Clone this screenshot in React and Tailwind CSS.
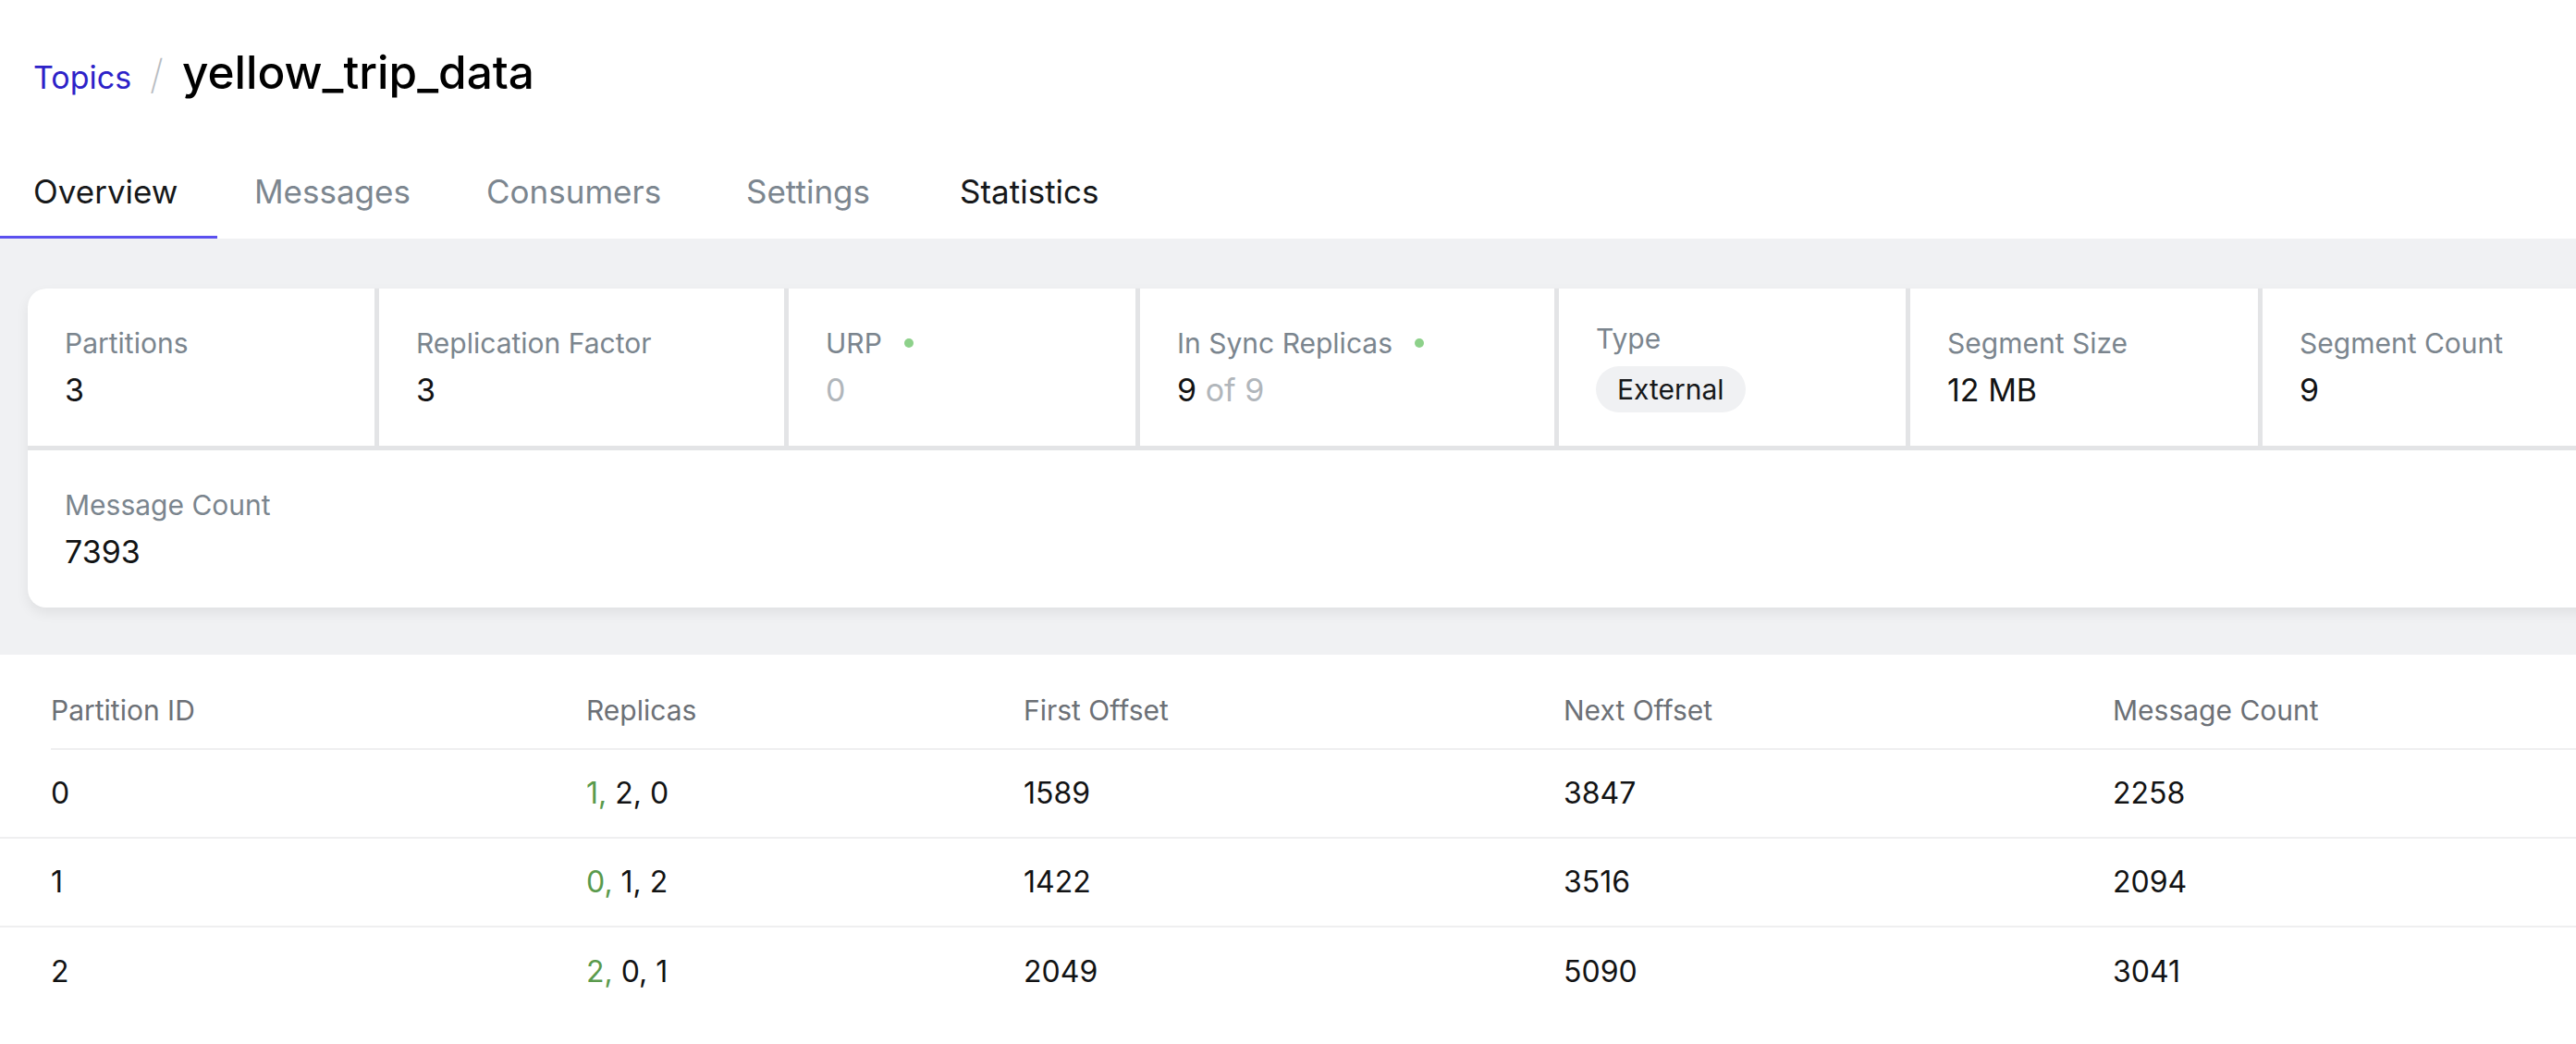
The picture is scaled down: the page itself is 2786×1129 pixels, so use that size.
const tabs = [
  { name: 'Overview', className: 'w-[235px] pl-9 text-[#16181a] border-[#5b50ef]' },
  { name: 'Messages', className: 'w-[251px] pl-10 text-[#7c868f] border-transparent' },
  { name: 'Consumers', className: 'w-[281px] pl-10 text-[#7c868f] border-transparent' },
  { name: 'Settings', className: 'w-[231px] pl-10 text-[#7c868f] border-transparent' },
  { name: 'Statistics', className: 'w-[240px] pl-10 text-[#16181a] border-transparent' },
];

const partitions = [
  { id: 0, replicas: [1, 2, 0], first: 1589, next: 3847, count: 2258 },
  { id: 1, replicas: [0, 1, 2], first: 1422, next: 3516, count: 2094 },
  { id: 2, replicas: [2, 0, 1], first: 2049, next: 5090, count: 3041 },
];

function Dot() {
  return <span className="ml-[24px] inline-block h-[10px] w-[10px] rounded-full bg-[#8dd18a]" />;
}

function Stat({ label, width, dot, children }) {
  return (
    <div className={`${width} flex-none bg-white pl-10 flex flex-col justify-center gap-[13px]`}>
      <div className="flex items-center text-[30px] leading-[36px] text-[#7b858e]">
        {label}
        {dot && <Dot />}
      </div>
      <div className="text-[34px] leading-[40px] text-[#121314]">{children}</div>
    </div>
  );
}

export default function App() {
  return (
    <div className="w-full overflow-hidden bg-white font-['Inter','Liberation_Sans',sans-serif]">
      {/* header */}
      <div className="pt-[48px]">
        <div className="flex items-baseline pl-9">
          <a className="text-[34px] leading-[60px] text-[#2d22c8]">Topics</a>
          <span className="mx-[20px] text-[44px] leading-[60px] font-extralight text-[#b9bdc2]">/</span>
          <h1 className="text-[49.5px] leading-[60px] font-medium text-black">yellow_trip_data</h1>
        </div>
        <div className="mt-[73px] flex">
          {tabs.map(t => (
            <div
              key={t.name}
              className={`${t.className} border-b-[3px] pb-[28px] text-[35px] leading-[40px]`}
            >
              {t.name}
            </div>
          ))}
        </div>
      </div>

      {/* stats */}
      <div className="bg-[#f0f1f3] pt-[54px] pb-[51px] pl-[30px]">
        <div className="w-[2792px] overflow-hidden rounded-[20px] bg-[#e3e4e6] shadow-[0_6px_14px_rgba(0,0,0,0.07)]">
          <div className="flex h-[170px] gap-[5px]">
            <Stat label="Partitions" width="w-[375px]">3</Stat>
            <Stat label="Replication Factor" width="w-[438px]">3</Stat>
            <Stat label="URP" width="w-[375px]" dot>
              <span className="text-[#b1b6bb]">0</span>
            </Stat>
            <Stat label="In Sync Replicas" width="w-[448px]" dot>
              9 <span className="text-[#b1b6bb]">of 9</span>
            </Stat>
            <div className="w-[375px] flex-none bg-white pl-10 flex flex-col justify-center gap-[12px]">
              <div className="text-[30px] leading-[36px] text-[#7b858e]">Type</div>
              <div>
                <span className="inline-block rounded-full bg-[#f0f1f3] px-[23px] py-[7px] text-[30px] leading-[36px] text-[#16181a]">
                  External
                </span>
              </div>
            </div>
            <Stat label="Segment Size" width="w-[376px]">12 MB</Stat>
            <Stat label="Segment Count" width="w-[360px]">9</Stat>
          </div>
          <div className="mt-[5px] flex h-[170px]">
            <Stat label="Message Count" width="w-full">7393</Stat>
          </div>
        </div>
      </div>

      {/* partitions table */}
      <div className="pl-[55px]">
        <div className="grid grid-cols-[579px_473px_584px_594px_1fr] border-b-2 border-[#efeff0] pt-[42px] pb-[23px] text-[30px] leading-[36px] text-[#6c7076]">
          <div>Partition ID</div>
          <div>Replicas</div>
          <div>First Offset</div>
          <div>Next Offset</div>
          <div>Message Count</div>
        </div>
      </div>
      {partitions.map((p, i) => (
        <div
          key={p.id}
          className={`grid h-[96px] grid-cols-[579px_473px_584px_594px_1fr] items-center pl-[55px] text-[32px] leading-[38px] text-[#121314] ${i < partitions.length - 1 ? 'border-b-2 border-[#efeff0]' : ''}`}
        >
          <div>{p.id}</div>
          <div>
            <span className="text-[#5a9a4c]">{p.replicas[0]},</span> {p.replicas[1]}, {p.replicas[2]}
          </div>
          <div>{p.first}</div>
          <div>{p.next}</div>
          <div>{p.count}</div>
        </div>
      ))}
    </div>
  );
}
